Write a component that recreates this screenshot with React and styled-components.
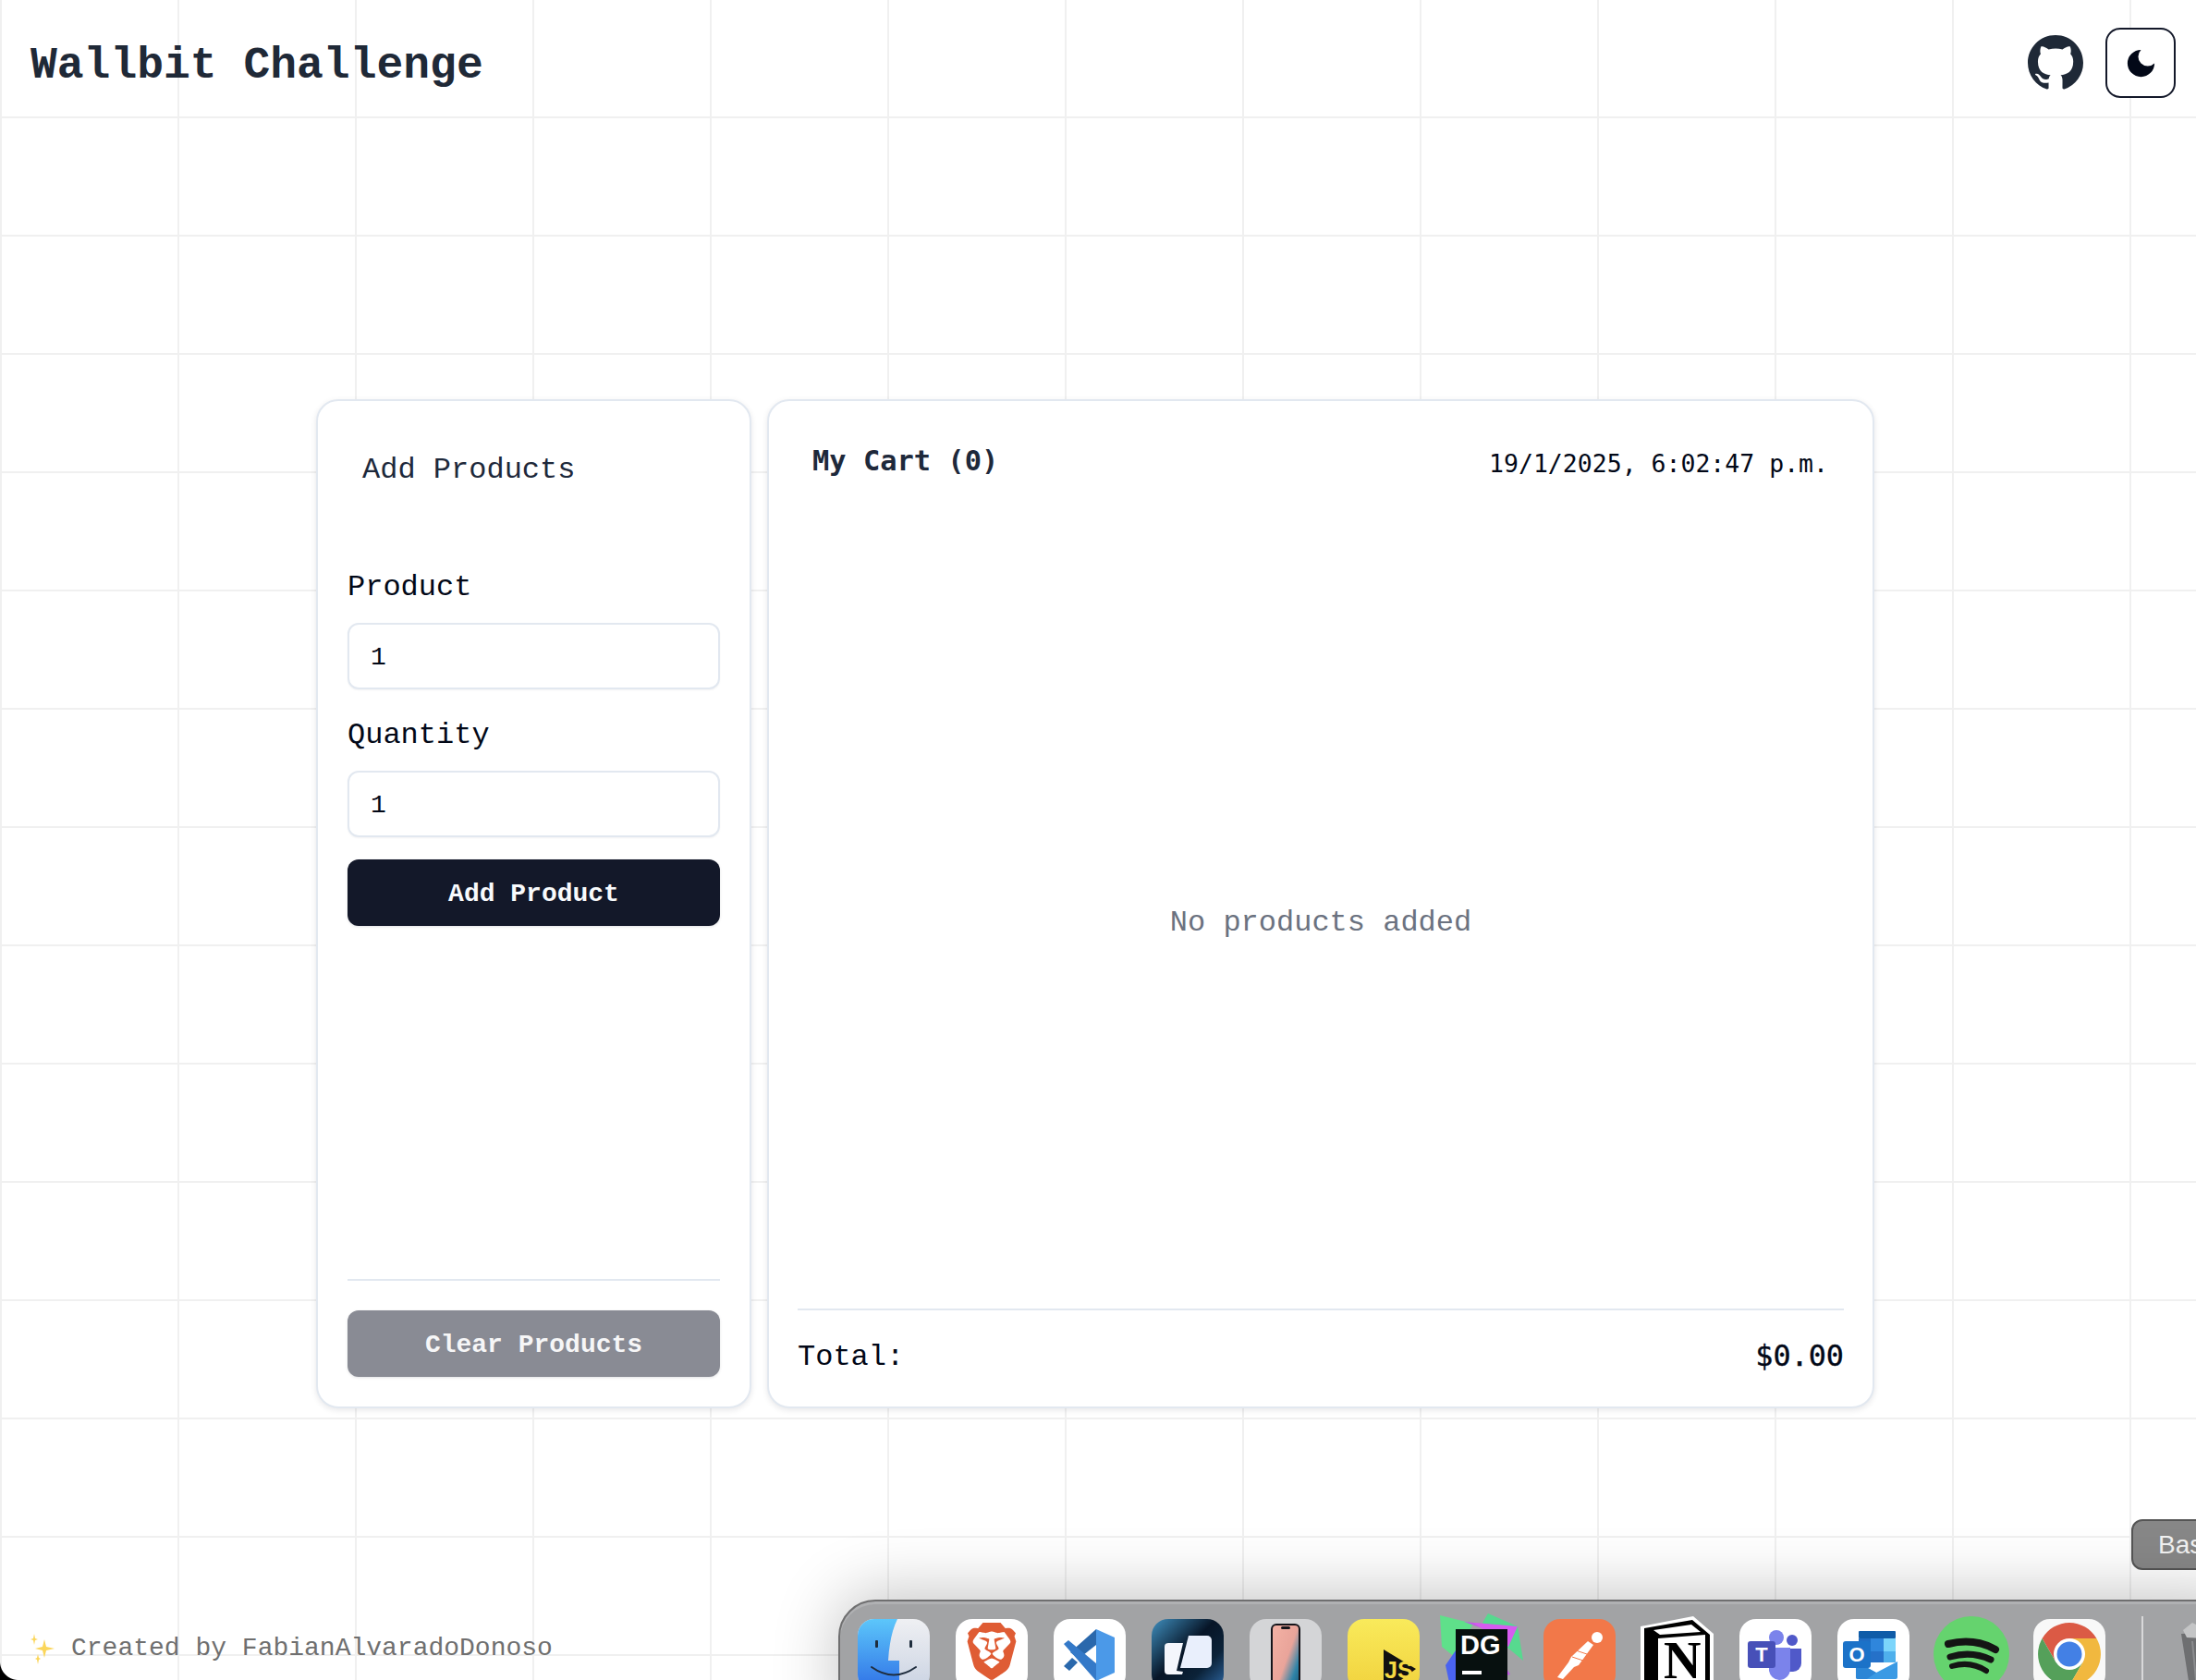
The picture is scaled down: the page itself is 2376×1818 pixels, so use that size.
import React from 'react';
import styled, { createGlobalStyle } from 'styled-components';
import { SiBrave } from 'react-icons/si';

const GlobalStyle = createGlobalStyle`
  html, body {
    margin: 0;
    padding: 0;
    background: #fff;
    overflow: hidden;
  }
  * {
    box-sizing: border-box;
  }
`;

const MONO = '"Liberation Mono", "DejaVu Sans Mono", monospace';
const DIGITS = '"DejaVu Sans Mono", "Liberation Mono", monospace';

// Page with the faint grid behind everything
const Page = styled.div`
  position: relative;
  width: 2376px;
  height: 1818px;
  overflow: hidden;
  display: flex;
  flex-direction: column;
  font-family: ${MONO};
  background-color: #fff;
  background-image:
    linear-gradient(to right, #f0f0f0 2px, transparent 2px),
    linear-gradient(to bottom, #f0f0f0 2px, transparent 2px);
  background-size: 192px 128px;
  background-position: 0 -2px;
`;

const Header = styled.header`
  height: 126px;
  flex: none;
  display: flex;
  align-items: center;
  justify-content: space-between;
  padding: 10px 22px 0 33px;
`;

const Title = styled.h1`
  margin: 0;
  padding-top: 6px;
  font-size: 48px;
  line-height: 56px;
  font-weight: 700;
  color: #1f2937;
`;

const HeaderActions = styled.div`
  display: flex;
  align-items: center;
  gap: 24px;
`;

const ThemeButton = styled.button`
  width: 76px;
  height: 76px;
  padding: 0;
  display: flex;
  align-items: center;
  justify-content: center;
  background: #fff;
  border: 2px solid #131829;
  border-radius: 16px;
  color: #020817;
`;

const Main = styled.main`
  flex: none;
  display: flex;
  gap: 17px;
  padding: 306px 0 0 342px;
`;

const Card = styled.section`
  height: 1092px;
  width: ${(p) => p.$width}px;
  display: flex;
  flex-direction: column;
  background: #fff;
  border: 2px solid #e2e8f0;
  border-radius: 24px;
  box-shadow: 0 2px 6px rgba(15, 23, 42, 0.1);
  padding: ${(p) => p.$padding};
`;

const CardTitle = styled.h2`
  margin: 0 0 77px 16px;
  padding-top: 3px;
  font-size: 32px;
  line-height: 48px;
  font-weight: 400;
  color: #1e293b;
`;

const Label = styled.label`
  display: block;
  padding-top: 2px;
  font-size: 32px;
  line-height: 48px;
  color: #020817;
  margin-bottom: 14px;
`;

const Input = styled.input`
  display: block;
  width: 100%;
  height: 72px;
  margin-bottom: 24px;
  padding: 2px 24px 0 23px;
  background: #fff;
  border: 2px solid #e2e8f0;
  border-radius: 12px;
  box-shadow: 0 1px 2px rgba(15, 23, 42, 0.05);
  font-family: ${MONO};
  font-size: 28px;
  color: #020817;
  outline: none;
`;

const Button = styled.button`
  display: block;
  width: 100%;
  height: 72px;
  padding: 2px 0 0;
  background: ${(p) => (p.$muted ? '#898b94' : '#131829')};
  color: ${(p) => (p.$muted ? '#f6f6f7' : '#f8fafc')};
  border: none;
  border-radius: 12px;
  box-shadow: 0 1px 3px rgba(15, 23, 42, 0.12);
  font-family: ${MONO};
  font-size: 28px;
  font-weight: 700;
`;

const Divider = styled.hr`
  width: 100%;
  height: 2px;
  flex: none;
  margin: ${(p) => p.$margin};
  border: none;
  background: #e2e8f0;
`;

const CartHeader = styled.div`
  display: flex;
  justify-content: space-between;
  align-items: flex-start;
  padding: 0 17px 0 16px;
`;

const CartTitle = styled.h2`
  margin: 0;
  padding-top: 1px;
  font-family: ${DIGITS};
  font-size: 30.4px;
  line-height: 48px;
  font-weight: 700;
  color: #1e293b;
`;

const CartDate = styled.span`
  padding-top: 8px;
  font-family: ${DIGITS};
  font-size: 26.5px;
  line-height: 40px;
  color: #020817;
`;

const Empty = styled.div`
  flex: 1;
  display: flex;
  align-items: center;
  justify-content: center;
  padding-top: 58px;
  font-size: 32px;
  color: #6b7280;
`;

const TotalRow = styled.div`
  display: flex;
  justify-content: space-between;
  padding-top: 27px;
  font-size: 32px;
  line-height: 48px;
  color: #020817;
`;

const TotalValue = styled.span`
  font-family: ${DIGITS};
  font-size: 31.8px;
  line-height: 44px;
  -webkit-text-stroke: 0.4px #020817;
`;

const Footer = styled.footer`
  margin-top: auto;
  display: flex;
  align-items: center;
  gap: 17px;
  padding: 0 0 16px 33px;
  font-size: 28px;
  line-height: 36px;
  color: #6f6f6f;
`;

// Rounded screen corner from the capture
const ScreenCorner = styled.div`
  position: absolute;
  left: 0;
  bottom: 0;
  width: 20px;
  height: 20px;
  background: radial-gradient(circle at 100% 0, transparent 19.5px, #000 20.5px);
`;

// macOS dock lying over the page
const Dock = styled.div`
  position: absolute;
  left: 907px;
  right: -60px;
  top: 1731px;
  height: 140px;
  display: flex;
  align-items: flex-start;
  gap: 28px;
  padding: 19px 0 0 19px;
  background: #a2a3a5;
  border: 2px solid #6f6f70;
  border-radius: 40px 40px 0 0;
  box-shadow:
    inset 0 3px 0 #b0b1b3,
    0 -6px 70px rgba(0, 0, 0, 0.24);
`;

const DockIcon = styled.svg`
  width: 78px;
  height: 78px;
  flex: none;
  overflow: visible;
`;

const BraveTile = styled.div`
  width: 78px;
  height: 78px;
  flex: none;
  display: flex;
  justify-content: center;
  padding-top: 4px;
  background: #fff;
  border-radius: 18px;
  color: #df5c34;
`;

const DockSeparator = styled.div`
  width: 2px;
  height: 90px;
  flex: none;
  margin: -3px 13px 0 11px;
  background: #d8d8d9;
`;

const Tooltip = styled.div`
  position: absolute;
  left: 2306px;
  right: -30px;
  top: 1644px;
  height: 55px;
  padding-left: 27px;
  background: #878787;
  border: 2px solid #555;
  border-radius: 12px;
  font-family: "Liberation Sans", sans-serif;
  font-size: 28px;
  line-height: 51px;
  color: #f2f2f2;
`;

const Finder = () => (
  <DockIcon viewBox="0 0 78 78">
    <defs>
      <linearGradient id="finderBlue" x1="0" y1="0" x2="0" y2="1">
        <stop offset="0" stopColor="#5cc6fa" />
        <stop offset="1" stopColor="#2f6fe6" />
      </linearGradient>
      <linearGradient id="finderGrey" x1="0" y1="0" x2="0" y2="1">
        <stop offset="0" stopColor="#eff0f3" />
        <stop offset="1" stopColor="#c9d2e2" />
      </linearGradient>
    </defs>
    <rect width="78" height="78" rx="18" fill="url(#finderGrey)" />
    <path d="M43 0H18A18 18 0 0 0 0 18v42a18 18 0 0 0 18 18h27V45H33C34 28 37 12 43 0Z" fill="url(#finderBlue)" />
    <rect x="19" y="23" width="3" height="8" rx="1" fill="#1f2d3d" />
    <rect x="56" y="23" width="3" height="8" rx="1" fill="#1f2d3d" />
    <path d="M15 52q24 17 48 0" fill="none" stroke="#1f2d3d" strokeWidth="2" strokeLinecap="round" />
  </DockIcon>
);

const VsCode = () => (
  <DockIcon viewBox="0 0 78 78">
    <rect width="78" height="78" rx="18" fill="#fff" />
    <path d="M46 11 46 28 27 43 18 36Z" fill="#2a68ac" />
    <path d="M11 51 20 42 26 47 17 56Z" fill="#2a68ac" />
    <path d="M11 27 16 23 46 48 46 67Z" fill="#3479c8" />
    <path d="M46 11 66 20V58L46 67Z" fill="#4b99e8" />
  </DockIcon>
);

const Lens = () => (
  <DockIcon viewBox="0 0 78 78">
    <defs>
      <linearGradient id="lensBg" x1="0" y1="0" x2="1" y2="1">
        <stop offset="0" stopColor="#3f8fbe" />
        <stop offset="0.45" stopColor="#071527" />
        <stop offset="0.7" stopColor="#0b2238" />
        <stop offset="1" stopColor="#2f6aa8" />
      </linearGradient>
    </defs>
    <rect width="78" height="78" rx="18" fill="url(#lensBg)" />
    <path d="M40 18H60a5 5 0 0 1 5 5V48a5 5 0 0 1-5 5H31Z" fill="#e9effc" />
    <path d="M18 26H34L27 56 34 57 33 60H18a4 4 0 0 1-4-4V30a4 4 0 0 1 4-4Z" fill="#f4f6fc" />
  </DockIcon>
);

const PhoneMirror = () => (
  <DockIcon viewBox="0 0 78 78">
    <defs>
      <linearGradient id="phoneWall" x1="0" y1="0" x2="1" y2="1">
        <stop offset="0" stopColor="#f3b1a4" />
        <stop offset="0.5" stopColor="#e9a49a" />
        <stop offset="0.75" stopColor="#2f84a8" />
        <stop offset="1" stopColor="#16506f" />
      </linearGradient>
    </defs>
    <rect width="78" height="78" rx="18" fill="#d4d5d7" />
    <rect x="23" y="5" width="32" height="82" rx="6" fill="#14141a" />
    <rect x="25" y="7" width="28" height="78" rx="4" fill="url(#phoneWall)" />
    <rect x="34" y="8" width="10" height="3" rx="1.5" fill="#14141a" />
  </DockIcon>
);

const JsApp = () => (
  <DockIcon viewBox="0 0 78 78">
    <defs>
      <linearGradient id="jsBg" x1="0" y1="0" x2="0" y2="1">
        <stop offset="0" stopColor="#f9ea5b" />
        <stop offset="1" stopColor="#f1d23d" />
      </linearGradient>
    </defs>
    <rect width="78" height="78" rx="18" fill="url(#jsBg)" />
    <path d="M39 33 74 54 39 80Z" fill="#111" />
    <text x="40" y="64" fontFamily="Liberation Sans, sans-serif" fontSize="25" fontWeight="700" fill="#f4d842">JS</text>
  </DockIcon>
);

const DataGrip = () => (
  <DockIcon viewBox="0 0 78 78">
    <path d="M-6-4 30 5 11 42-4 30Z" fill="#5fe08a" />
    <path d="M46-6 78 8 84 45 66 30 40 4Z" fill="#57d98f" />
    <path d="M20 3 72 8 67 26 60 62 70 60 40 10Z" fill="#c457e8" />
    <path d="M30 4 78 8 68 30Z" fill="#d65cf0" />
    <path d="M11 34 0 50 6 78H12Z" fill="#4a63f0" />
    <rect x="11" y="11" width="56" height="70" fill="#07100f" />
    <text x="16" y="38" fontFamily="Liberation Sans, sans-serif" fontSize="29" fontWeight="700" fill="#fff">DG</text>
    <rect x="18" y="56" width="21" height="4" fill="#fff" />
  </DockIcon>
);

const Postman = () => (
  <DockIcon viewBox="0 0 78 78">
    <rect width="78" height="78" rx="18" fill="#f27849" />
    <circle cx="58" cy="20" r="6" fill="#fff" />
    <path d="M48 24 54 28 38 50 33 52 21 65 15 63 27 47 30 41Z" fill="#fff" />
    <path d="M35 34 47 38M31 41 43 45" stroke="#f27849" strokeWidth="1" />
  </DockIcon>
);

const Notion = () => (
  <DockIcon viewBox="0 0 78 78">
    <path d="M-1 8 56-3 78 16V90H6L-1 76Z" fill="#fff" />
    <path d="M3 10 55 1 74 17V90H9L3 74Z" fill="#000" />
    <path d="M18 21 69 17V88H18Z" fill="#fff" />
    <path d="M13 12 54 6 64 14 20 17Z" fill="#fff" />
    <text x="24" y="64" fontFamily="Liberation Serif, serif" fontSize="56" fontWeight="700" fill="#000">N</text>
  </DockIcon>
);

const Teams = () => (
  <DockIcon viewBox="0 0 78 78">
    <rect width="78" height="78" rx="18" fill="#fff" />
    <circle cx="40" cy="20" r="8" fill="#7b83eb" />
    <circle cx="57" cy="23" r="6" fill="#5059c9" />
    <path d="M54 32H67V48a9 9 0 0 1-9 9H54Z" fill="#5059c9" />
    <path d="M32 31H55V54a12 12 0 0 1-12 12 12 12 0 0 1-11-10Z" fill="#7b83eb" />
    <rect x="9" y="24" width="30" height="29" rx="3" fill="#4750b8" />
    <text x="24" y="46" textAnchor="middle" fontFamily="Liberation Sans, sans-serif" fontSize="22" fontWeight="700" fill="#fff">T</text>
  </DockIcon>
);

const Outlook = () => (
  <DockIcon viewBox="0 0 78 78">
    <rect width="78" height="78" rx="18" fill="#fff" />
    <rect x="23" y="13" width="40" height="8" rx="1" fill="#0f5ca8" />
    <rect x="23" y="21" width="13" height="14" fill="#1f6dc3" />
    <rect x="36" y="21" width="14" height="14" fill="#2f86dc" />
    <rect x="50" y="21" width="13" height="14" fill="#7bd5fb" />
    <rect x="36" y="35" width="14" height="12" fill="#2571c9" />
    <rect x="50" y="35" width="13" height="12" fill="#4fb0ec" />
    <path d="M20 46 42 58 65 46V63a2 2 0 0 1-2 2H22a2 2 0 0 1-2-2Z" fill="#3a9ae4" />
    <path d="M20 46 42 58 32 65H22a2 2 0 0 1-2-2Z" fill="#2c86d6" />
    <rect x="6" y="24" width="30" height="29" rx="3" fill="#1b72c8" />
    <text x="21" y="46" textAnchor="middle" fontFamily="Liberation Sans, sans-serif" fontSize="22" fontWeight="700" fill="#fff">O</text>
  </DockIcon>
);

const Spotify = () => (
  <DockIcon viewBox="0 0 78 78">
    <circle cx="39" cy="38" r="41" fill="#65d36e" />
    <g fill="none" stroke="#141414" strokeLinecap="round">
      <path d="M14 27Q42 20 65 33" strokeWidth="8" />
      <path d="M16 41Q39 34 60 44" strokeWidth="7" />
      <path d="M18 51Q38 45 55 56" strokeWidth="6" />
    </g>
  </DockIcon>
);

const Chrome = () => (
  <DockIcon viewBox="0 0 78 78">
    <rect width="78" height="78" rx="18" fill="#f8f8f8" />
    <path d="M68.4 21A34 34 0 0 0 9.6 21L24.3 46.5 39 21Z" fill="#db5a45" />
    <path d="M9.6 21A34 34 0 0 0 39 72L53.7 46.5H24.3Z" fill="#55a05a" />
    <path d="M39 72A34 34 0 0 0 68.4 21H39L53.7 46.5Z" fill="#f1b83f" />
    <circle cx="39" cy="38" r="17" fill="#fff" />
    <circle cx="39" cy="38" r="13.5" fill="#4380e5" />
  </DockIcon>
);

const Trash = () => (
  <DockIcon viewBox="0 0 78 78">
    <path d="M0 16 68 14 60 80H10Z" fill="#6e6f71" />
    <path d="M2 12 12 4 24 10 36 2 46 9 60 6 66 14 40 22 6 20Z" fill="#c4c5c6" />
    <path d="M12 24 17 76M30 25 32 76" stroke="#8b8c8e" strokeWidth="2" />
  </DockIcon>
);

const App = () => {
  return (
    <>
      <GlobalStyle />
      <Page>
        <Header>
          <Title>Wallbit Challenge</Title>
          <HeaderActions>
            <svg width="60" height="60" viewBox="0 0 16 16" fill="#1f2937" aria-label="GitHub">
              <path d="M8 0C3.58 0 0 3.58 0 8c0 3.54 2.29 6.53 5.47 7.59.4.07.55-.17.55-.38 0-.19-.01-.82-.01-1.49-2.01.37-2.53-.49-2.69-.94-.09-.23-.48-.94-.82-1.13-.28-.15-.68-.52-.01-.53.63-.01 1.08.58 1.23.82.72 1.21 1.87.87 2.33.66.07-.52.28-.87.51-1.07-1.78-.2-3.64-.89-3.64-3.95 0-.87.31-1.59.82-2.15-.08-.2-.36-1.02.08-2.12 0 0 .67-.21 2.2.82.64-.18 1.32-.27 2-.27.68 0 1.36.09 2 .27 1.53-1.04 2.2-.82 2.2-.82.44 1.1.16 1.92.08 2.12.51.56.82 1.27.82 2.15 0 3.07-1.87 3.75-3.65 3.95.29.25.54.73.54 1.48 0 1.07-.01 1.93-.01 2.2 0 .21.15.46.55.38A8.013 8.013 0 0016 8c0-4.42-3.58-8-8-8z" />
            </svg>
            <ThemeButton aria-label="Toggle theme">
              <svg width="39" height="39" viewBox="0 0 24 24" fill="currentColor">
                <path d="M12 3a6 6 0 0 0 9 9 9 9 0 1 1-9-9Z" />
              </svg>
            </ThemeButton>
          </HeaderActions>
        </Header>

        <Main>
          <Card $width={471} $padding="48px 32px 32px">
            <CardTitle>Add Products</CardTitle>
            <Label>Product</Label>
            <Input defaultValue="1" />
            <Label>Quantity</Label>
            <Input defaultValue="1" />
            <Button>Add Product</Button>
            <Divider $margin="auto 0 32px" />
            <Button $muted>Clear Products</Button>
          </Card>

          <Card $width={1198} $padding="40px 31px 29px 31px">
            <CartHeader>
              <CartTitle>My Cart (0)</CartTitle>
              <CartDate>19/1/2025, 6:02:47 p.m.</CartDate>
            </CartHeader>
            <Empty>No products added</Empty>
            <Divider $margin="0" />
            <TotalRow>
              <span>Total:</span>
              <TotalValue>$0.00</TotalValue>
            </TotalRow>
          </Card>
        </Main>

        <Footer>
          <svg width="27" height="36" viewBox="0 0 27 36" fill="#fbd65a" aria-hidden="true">
            <path d="M15 8 17 16 26 18 17 20 15 28 13 20 5 18 13 16Z" />
            <path d="M4 2 5 7 8 8 5 9 4 14 3 9 0 8 3 7Z" />
            <path d="M8 24 9 28 11 29 9 30 8 35 7 30 5 29 7 28Z" />
          </svg>
          Created by FabianAlvaradoDonoso
        </Footer>

        <ScreenCorner />
        <Tooltip>Bas</Tooltip>
        <Dock>
          <Finder />
          <BraveTile>
            <SiBrave size={62} />
          </BraveTile>
          <VsCode />
          <Lens />
          <PhoneMirror />
          <JsApp />
          <DataGrip />
          <Postman />
          <Notion />
          <Teams />
          <Outlook />
          <Spotify />
          <Chrome />
          <DockSeparator />
          <Trash />
        </Dock>
      </Page>
    </>
  );
};

export default App;
